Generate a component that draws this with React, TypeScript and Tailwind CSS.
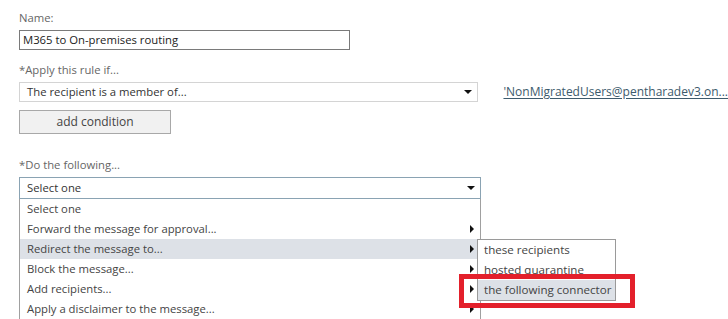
const actions = [
  { label: 'Select one', sub: false },
  { label: 'Forward the message for approval...', sub: true },
  { label: 'Redirect the message to...', sub: true, active: true },
  { label: 'Block the message...', sub: true },
  { label: 'Add recipients...', sub: true },
  { label: 'Apply a disclaimer to the message...', sub: true },
];

const targets = ['these recipients', 'hosted quarantine', 'the following connector'];

function ArrowRight() {
  return <span className="h-0 w-0 border-y-[4px] border-l-[4px] border-y-transparent border-l-[#111]" />;
}

function ArrowDown() {
  return <span className="h-0 w-0 border-x-[4px] border-t-[4px] border-x-transparent border-t-[#111]" />;
}

function SubMenu() {
  return (
    <div className="absolute left-[457px] top-0 z-20 w-[139px] border border-[#9a9a9a] bg-white">
      {targets.map((t, i) => (
        <div
          key={t}
          className={`h-[20px] whitespace-nowrap pl-[6px] text-[11.6px] leading-[20px] text-[#444] ${i === 2 ? 'bg-[#dde1e7]' : ''}`}
        >
          {t}
        </div>
      ))}
      {/* red highlight box from the screenshot */}
      <div className="absolute left-[-19px] top-[34px] h-[34px] w-[176px] border-[5px] border-[#e3202b]" />
    </div>
  );
}

export default function App() {
  return (
    <div className="relative h-[319px] w-[728px] overflow-hidden bg-white pl-[19px] pt-[10px] font-['Open_Sans',sans-serif] text-[11.3px] text-[#333]">
      <div className="leading-[16px] text-[#666]">Name:</div>
      <div className="mt-[4px] h-[20px] w-[331px] border border-[#7a7a7a] pl-[3px] leading-[18px] text-[#222]">
        M365 to On-premises routing
      </div>

      <div className="mt-[12px] leading-[16px] text-[#666]">*Apply this rule if...</div>
      <div className="mt-[4px] flex items-center">
        <div className="flex h-[20px] w-[462px] items-center justify-between border border-[#d4d4d4] pl-[7px] pr-[5px] text-[#333]">
          <span>The recipient is a member of...</span>
          <ArrowDown />
        </div>
        <span className="ml-[25px] text-[12px] text-[#3d5a6c] underline underline-offset-2">
          'NonMigratedUsers@pentharadev3.on...
        </span>
      </div>

      <button className="mt-[8px] h-[24px] w-[152px] border border-[#a8a8a8] bg-[#f1f1f1] text-[12px] text-[#444]">
        add condition
      </button>

      <div className="mt-[23px] leading-[16px] text-[#666]">*Do the following...</div>
      <div className="relative mt-[4px] w-[462px]">
        <div className="flex h-[22px] items-center justify-between border border-[#8aa3b3] pl-[7px] pr-[5px] text-[#333]">
          <span>Select one</span>
          <ArrowDown />
        </div>
        <div className="absolute left-0 top-full z-10 w-[462px] border-x border-[#a0a0a0] bg-white">
          {actions.map((a) => (
            <div
              key={a.label}
              className={`relative flex h-[20px] items-center justify-between pl-[7px] pr-[6px] text-[#444] ${a.active ? 'bg-[#dde1e7]' : ''}`}
            >
              <span>{a.label}</span>
              {a.sub && <ArrowRight />}
              {a.active && <SubMenu />}
            </div>
          ))}
        </div>
      </div>
    </div>
  );
}
